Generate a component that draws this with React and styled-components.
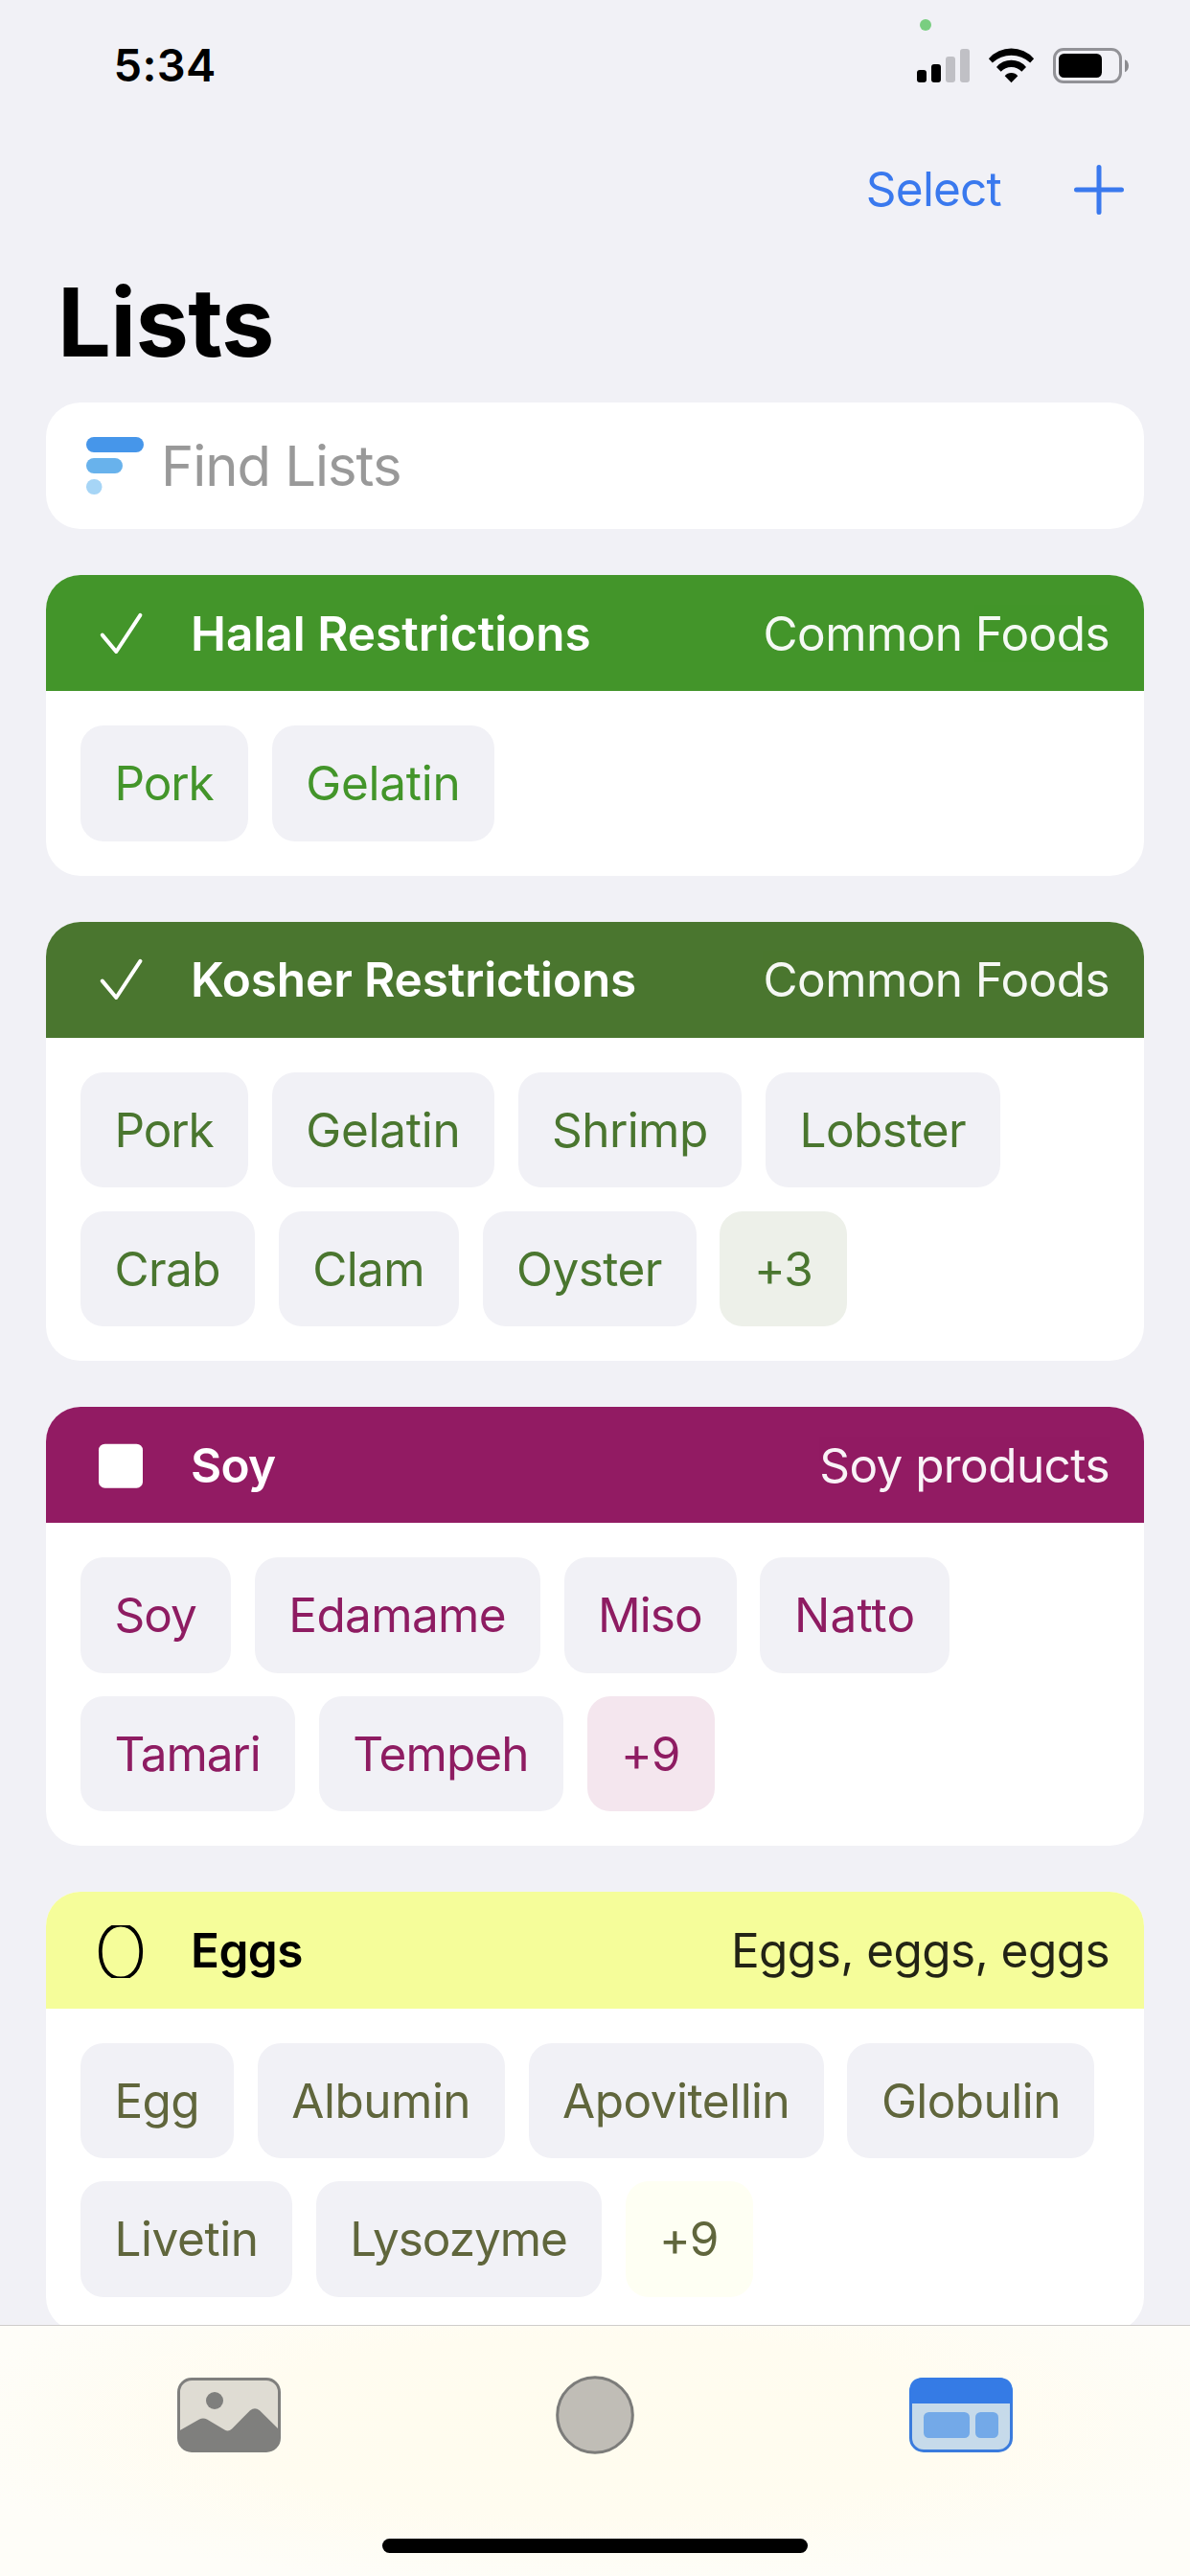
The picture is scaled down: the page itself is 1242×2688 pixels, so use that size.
import React from "react";
import styled, { createGlobalStyle } from "styled-components";

const GlobalStyle = createGlobalStyle`
  * { box-sizing: border-box; }
  body {
    margin: 0;
    background: #f1f1f6;
    font-family: Inter, "Liberation Sans", sans-serif;
    color: #000;
  }
`;

const Screen = styled.div`
  position: relative;
  width: 1242px;
  height: 2688px;
  overflow: hidden;
  background: #f1f1f6;
  display: flex;
  flex-direction: column;
`;

const StatusBar = styled.header`
  position: relative;
  flex: none;
  height: 136px;
  padding: 0 64px 0 118.5px;
  display: flex;
  align-items: center;
  justify-content: space-between;
`;

const Clock = styled.time`
  padding-bottom: 2px;
  font-size: 47px;
  font-weight: 600;
  letter-spacing: 0.35px;
  line-height: 1;
`;

const StatusIcons = styled.div`
  display: flex;
  align-items: center;
`;

const Glyph = styled.svg`
  display: block;
  flex: none;
  margin-left: ${(p) => p.$before || 0}px;
`;

const CameraDot = styled.span`
  position: absolute;
  left: 960px;
  top: 20px;
  width: 12px;
  height: 12px;
  border-radius: 50%;
  background: #79ce80;
`;

const NavBar = styled.nav`
  flex: none;
  height: 124px;
  padding-right: 69px;
  display: flex;
  align-items: center;
  justify-content: flex-end;
  gap: 76px;
`;

const PlainButton = styled.button`
  border: 0;
  padding: 0;
  background: none;
  font: 400 49.5px/1 Inter, "Liberation Sans", sans-serif;
  letter-spacing: -0.8px;
  color: #3a79ee;
`;

const Title = styled.h1`
  flex: none;
  margin: 0;
  padding-left: 60px;
  font-size: 99px;
  font-weight: 700;
  line-height: 152px;
  letter-spacing: -0.7px;
`;

const Content = styled.main`
  flex: none;
  padding: 8px 48px 0;
  display: flex;
  flex-direction: column;
  gap: 48px;
`;

const Search = styled.label`
  height: 132px;
  padding-left: 42px;
  border-radius: 36px;
  background: #fff;
  display: flex;
  align-items: center;
  gap: 17px;
`;

const Placeholder = styled.span`
  font-size: 58px;
  line-height: 1;
  letter-spacing: -1.03px;
  color: #999;
`;

const Cards = styled.div`
  display: flex;
  flex-direction: column;
  gap: 48px;
`;

const Card = styled.section`
  border-radius: 36px;
  overflow: hidden;
  background: #fff;
`;

const CardHeader = styled.div`
  height: 121.33px;
  padding: 0 36px 0 50px;
  display: flex;
  align-items: center;
  background: ${(p) => p.$bg};
  color: ${(p) => p.$fg};
`;

const CardTitle = styled.h2`
  margin: 0 auto 0 45px;
  padding-top: 1.5px;
  font-size: 49.5px;
  font-weight: 600;
  line-height: 1;
  letter-spacing: ${(p) => p.$tracking}px;
`;

const CardNote = styled.span`
  padding-top: 1.5px;
  font-size: 49.5px;
  line-height: 1;
  letter-spacing: -0.58px;
  opacity: ${(p) => p.$opacity};
`;

const CardBody = styled.div`
  padding: 36px;
  display: flex;
  flex-direction: column;
  gap: 24.33px;
`;

const ChipRow = styled.div`
  display: flex;
  gap: 24.8px;
`;

const Chip = styled.span`
  width: ${(p) => p.$width}px;
  height: 120.33px;
  padding: 1.5px 0 0 35.5px;
  border-radius: 24px;
  display: flex;
  align-items: center;
  font-size: 49.5px;
  line-height: 1;
  white-space: nowrap;
  letter-spacing: ${(p) => p.$tracking}px;
  background: ${(p) => p.$bg};
  color: ${(p) => p.$color};
`;

const TabBar = styled.footer`
  position: absolute;
  left: 0;
  right: 0;
  bottom: 0;
  height: 262px;
  border-top: 1px solid #cfcdcb;
  background:
    radial-gradient(ellipse 700px 170px at 50% 40%, #fffcee 0%, #fffcf0 55%, rgba(255, 252, 243, 0) 100%),
    #fefdf8;
  display: flex;
  flex-direction: column;
  align-items: center;
`;

const Tabs = styled.div`
  width: 100%;
  height: 186px;
  padding: 0 185px;
  display: flex;
  align-items: center;
  justify-content: space-between;
`;

const Tab = styled.button`
  border: 0;
  padding: 0;
  background: none;
  width: 108px;
  display: flex;
  justify-content: center;
`;

const HomeIndicator = styled.div`
  margin-top: 36px;
  width: 444px;
  height: 15px;
  border-radius: 7.5px;
  background: #000;
`;

const CheckIcon = () => (
  <Glyph width="56" height="58" viewBox="0 0 56 58" fill="none">
    <path d="M8.8 30.6 23.3 48 48.4 9.8" stroke="currentColor" strokeWidth="4" strokeLinecap="round" strokeLinejoin="round" />
  </Glyph>
);

const SquareIcon = () => (
  <Glyph width="56" height="58" viewBox="0 0 56 58">
    <rect x="5" y="6.7" width="46" height="46" rx="6.5" fill="currentColor" />
  </Glyph>
);

const EggIcon = () => (
  <Glyph width="56" height="58" viewBox="0 0 56 58">
    <svg x="0" y="3" width="56" height="55" viewBox="0 3 56 55">
      <path
        d="M28 2.6C39.8 2.6 49.2 13.5 49.2 30.5S39.8 58.4 28 58.4 6.8 47.5 6.8 30.5 16.2 2.6 28 2.6Z"
        fill="none"
        stroke="currentColor"
        strokeWidth="3.8"
      />
    </svg>
  </Glyph>
);

const icons = { check: CheckIcon, square: SquareIcon, egg: EggIcon };

const SignalIcon = () => (
  <Glyph width="55" height="37" viewBox="0 0 55 37">
    <rect x="0" y="23" width="10" height="13" rx="3" />
    <rect x="15" y="17" width="10" height="19" rx="3" />
    <rect x="30" y="9" width="10" height="27" rx="3" fill="#c0c0c5" />
    <rect x="45" y="1" width="10" height="35" rx="3" fill="#c0c0c5" />
  </Glyph>
);

const WifiIcon = () => (
  <Glyph $before={16} width="55" height="43" viewBox="0 0 55 43">
    <path d="M3.9 14.2A31.5 31.5 0 0 1 51.1 14.2L47.2 18.4A29 29 0 0 0 7.8 18.4Z" />
    <path d="M12 23A20.1 20.1 0 0 1 43 23L38.3 27.8A14.6 14.6 0 0 0 16.7 27.8Z" />
    <path d="M20.7 32.2A9 9 0 0 1 34.3 32.2L27.5 39.2Z" />
  </Glyph>
);

const BatteryIcon = () => (
  <Glyph $before={16} width="79" height="37" viewBox="0 0 79 37">
    <rect x="1.5" y="1.5" width="69" height="34" rx="9.5" fill="none" stroke="#929297" strokeWidth="3" />
    <rect x="6" y="6" width="45" height="25" rx="5.5" />
    <path d="M75 12.2C77.6 13.4 79 15.7 79 18.7S77.6 24 75 25.2Z" fill="#8b8b8f" />
  </Glyph>
);

const PlusIcon = () => (
  <Glyph width="52" height="52" viewBox="0 0 52 52">
    <path d="M26 2.5V49.5M2.5 26H49.5" stroke="#3a79ee" strokeWidth="5" strokeLinecap="round" />
  </Glyph>
);

const FilterIcon = () => (
  <Glyph width="61" height="60" viewBox="0 0 61 60">
    <rect x="0" y="0" width="60" height="16" rx="8" fill="#4696ea" />
    <rect x="0" y="22" width="38" height="16" rx="8" fill="#68b2ec" />
    <rect x="0" y="44" width="16.5" height="16" rx="8" fill="#a6d5f6" />
  </Glyph>
);

const PhotoIcon = () => (
  <Glyph width="108" height="78" viewBox="0 0 108 78">
    <rect x="1.5" y="1.5" width="105" height="75" rx="13.5" fill="#dfdcd3" stroke="#7f7f7d" strokeWidth="3" />
    <circle cx="39" cy="24" r="9" fill="#7f7f7d" />
    <path
      d="M1.5 55.8 23 43.6Q27 41.4 31 43.6L49.5 54.6Q53.5 57 57 53.4L76 34.2Q81 30.2 86 34.2L106.5 54.5V63Q106.5 76.5 93 76.5H15Q1.5 76.5 1.5 63Z"
      fill="#7f7f7d"
    />
  </Glyph>
);

const CaptureIcon = () => (
  <Glyph width="82" height="82" viewBox="0 0 82 82">
    <circle cx="41" cy="41" r="39.3" fill="#c0bdb6" stroke="#7c7c7a" strokeWidth="3" />
  </Glyph>
);

const ListsIcon = () => (
  <Glyph width="108" height="78" viewBox="0 0 108 78">
    <rect x="1.5" y="1.5" width="105" height="75" rx="13.5" fill="#c6daea" stroke="#3a7bdd" strokeWidth="3" />
    <path d="M0 27V15Q0 0 15 0H93Q108 0 108 15V27Z" fill="#357be5" />
    <rect x="15" y="36" width="48" height="27" rx="5.5" fill="#73a9e8" />
    <rect x="69" y="36" width="24" height="27" rx="5.5" fill="#73a9e8" />
  </Glyph>
);

// Each chip is [label, width, letter spacing].
const lists = [
  {
    icon: "check", title: "Halal Restrictions", tracking: 0, note: "Common Foods", noteOpacity: 0.95,
    bg: "#43952a", fg: "#fff", ink: "#43952a", more: "#edf5ea",
    rows: [[["Pork", 175, -1.15], ["Gelatin", 232, -0.25]]],
  },
  {
    icon: "check", title: "Kosher Restrictions", tracking: -0.12, note: "Common Foods", noteOpacity: 0.95,
    bg: "#4a762f", fg: "#fff", ink: "#4a762f", more: "#edf0e9",
    rows: [
      [["Pork", 175, -1.15], ["Gelatin", 232, -0.25], ["Shrimp", 233.5, -0.6], ["Lobster", 245, -0.5]],
      [["Crab", 182, -0.6], ["Clam", 188, -0.7], ["Oyster", 223, -0.55], ["+3", 133, -0.9]],
    ],
  },
  {
    icon: "square", title: "Soy", tracking: -0.7, note: "Soy products", noteOpacity: 0.95,
    bg: "#921b63", fg: "#fff", ink: "#8e1c62", more: "#f4e6ee",
    rows: [
      [["Soy", 157, -1], ["Edamame", 298, -0.65], ["Miso", 180, -1], ["Natto", 198, 0.2]],
      [["Tamari", 224, -1.11], ["Tempeh", 255, -0.9], ["+9", 133, -1.2]],
    ],
  },
  {
    icon: "egg", title: "Eggs", tracking: -0.55, note: "Eggs, eggs, eggs", noteOpacity: 0.86,
    bg: "#f5fd9a", fg: "#000", ink: "#60663c", more: "#fefff3",
    rows: [
      [["Egg", 160, -0.7], ["Albumin", 258, -0.5], ["Apovitellin", 308, -0.5], ["Globulin", 258, -0.55]],
      [["Livetin", 221, -0.45], ["Lysozyme", 298, -1.05], ["+9", 133, -1.2]],
    ],
  },
];

function ListCard({ list }) {
  const Icon = icons[list.icon];
  return (
    <Card>
      <CardHeader $bg={list.bg} $fg={list.fg}>
        <Icon />
        <CardTitle $tracking={list.tracking}>{list.title}</CardTitle>
        <CardNote $opacity={list.noteOpacity}>{list.note}</CardNote>
      </CardHeader>
      <CardBody>
        {list.rows.map((row, i) => (
          <ChipRow key={i}>
            {row.map(([label, width, tracking]) => (
              <Chip
                key={label}
                $width={width}
                $tracking={tracking}
                $bg={label.startsWith("+") ? list.more : "#f1f1f6"}
                $color={list.ink}
              >
                {label}
              </Chip>
            ))}
          </ChipRow>
        ))}
      </CardBody>
    </Card>
  );
}

export default function App() {
  return (
    <>
      <GlobalStyle />
      <Screen>
        <StatusBar>
          <Clock>5:34</Clock>
          <CameraDot />
          <StatusIcons>
            <SignalIcon />
            <WifiIcon />
            <BatteryIcon />
          </StatusIcons>
        </StatusBar>
        <NavBar>
          <PlainButton>Select</PlainButton>
          <PlainButton aria-label="Add list">
            <PlusIcon />
          </PlainButton>
        </NavBar>
        <Title>Lists</Title>
        <Content>
          <Search>
            <FilterIcon />
            <Placeholder>Find Lists</Placeholder>
          </Search>
          <Cards>
            {lists.map((list) => (
              <ListCard key={list.title} list={list} />
            ))}
          </Cards>
        </Content>
        <TabBar>
          <Tabs>
            <Tab aria-label="Photos"><PhotoIcon /></Tab>
            <Tab aria-label="Capture"><CaptureIcon /></Tab>
            <Tab aria-label="Lists"><ListsIcon /></Tab>
          </Tabs>
          <HomeIndicator />
        </TabBar>
      </Screen>
    </>
  );
}
